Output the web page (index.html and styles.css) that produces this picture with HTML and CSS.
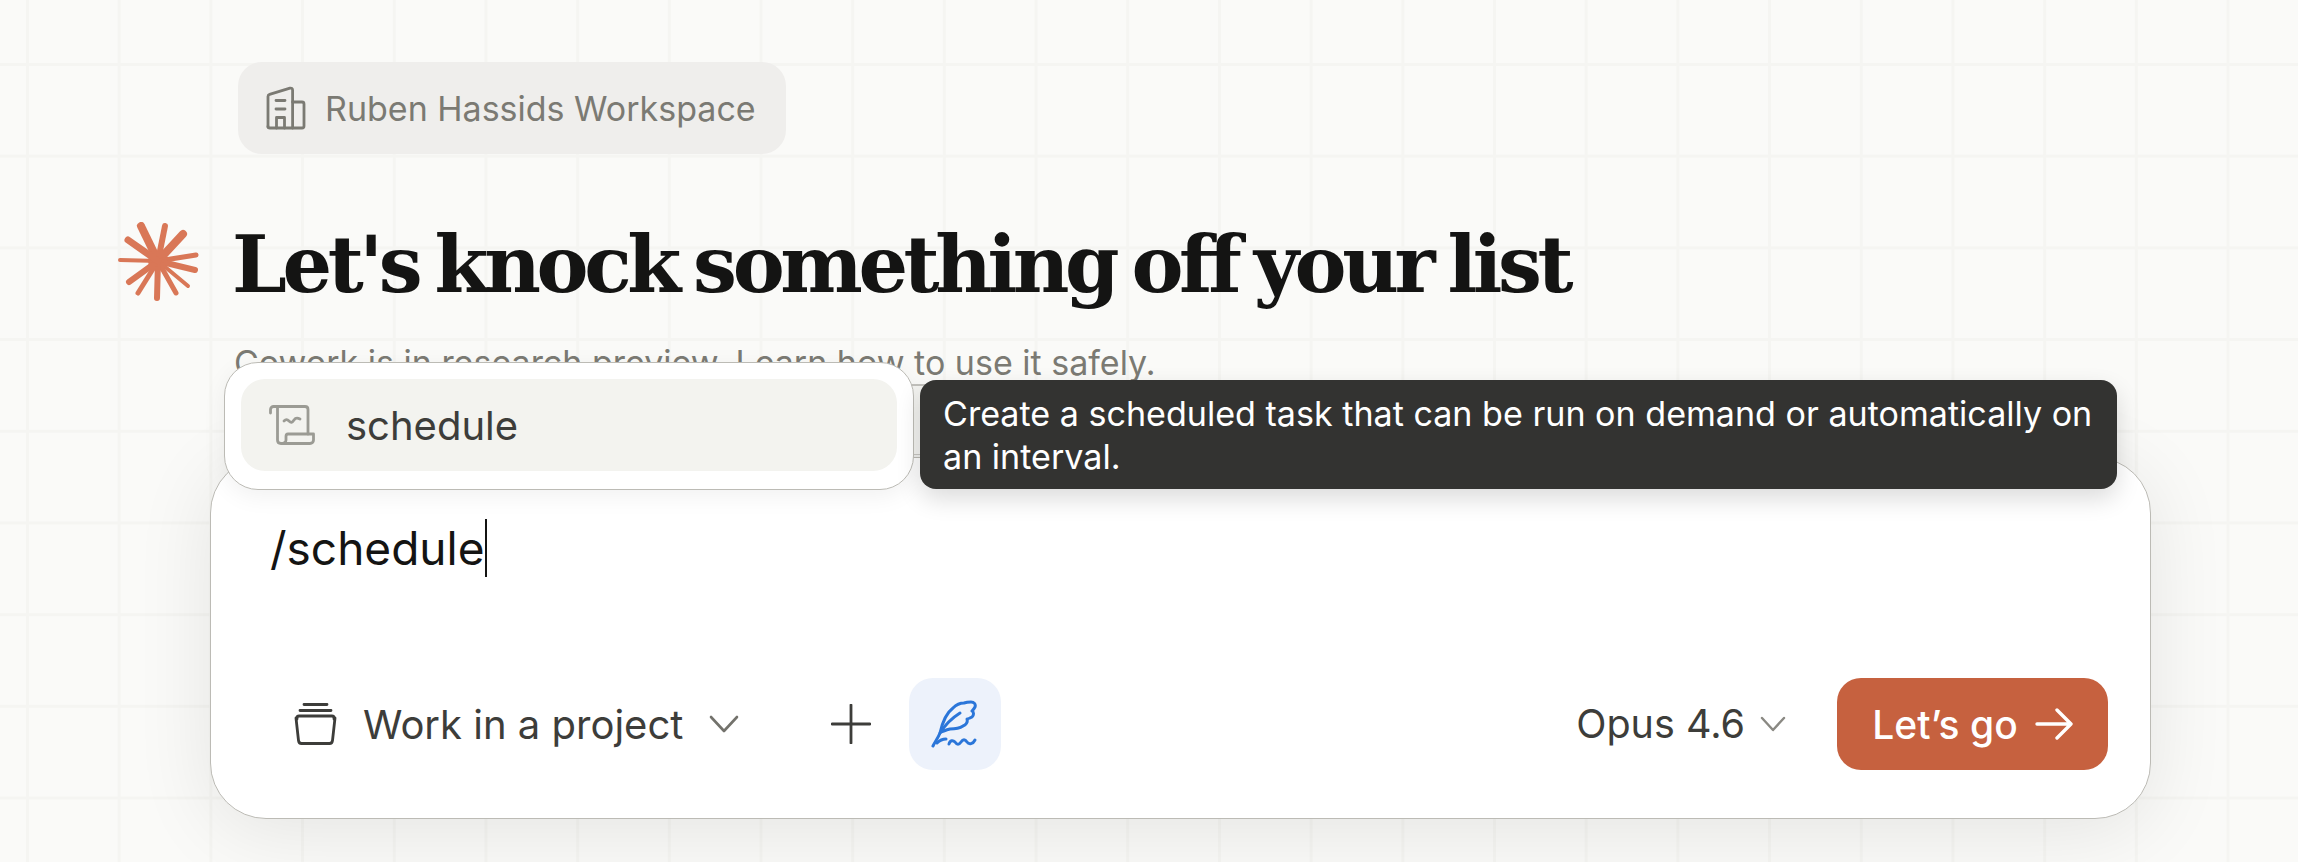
FILE: index.html
```html
<!DOCTYPE html>
<html lang="en">
<head>
  <meta charset="UTF-8">
  <title>Cowork</title>
  <link rel="stylesheet" href="styles.css">
</head>
<body>

  <div class="workspace-chip">
    <svg class="chip-icon" width="40" height="44" viewBox="0 0 40 44" fill="none" stroke="#7b7a73" stroke-width="2.8" stroke-linecap="round" stroke-linejoin="round">
      <path d="M2 41V10.500c0-1 .6-1.800 1.600-2.100L24 2.200c1.400-.4 2.600.5 2.600 2V42"/>
      <path d="M26.600 16H36c1.200 0 2 .8 2 2v22c0 1.200-.8 2-2 2H4c-1.200 0-2-.6-2-1.500"/>
      <path d="M10 14.500h9M10 23h9"/>
      <path d="M10.500 42V31.500h8V42"/>
    </svg>
    <span>Ruben Hassids Workspace</span>
  </div>

  <div class="heading-row">
    <svg class="star" width="82" height="80" viewBox="13 14 82 80" fill="none" stroke="#d97757" stroke-linecap="round">
      <circle cx="53" cy="53" r="10" fill="#d97757" stroke="none"/>
      <path stroke-width="8" d="M53 53L36 18"/>
      <path stroke-width="6" d="M53 53L60 18"/>
      <path stroke-width="8" d="M53 53L78 26"/>
      <path stroke-width="5" d="M53 53L91 47"/>
      <path stroke-width="6" d="M53 53L90 62"/>
      <path stroke-width="4" d="M53 53L83 78"/>
      <path stroke-width="5" d="M53 53L71 85"/>
      <path stroke-width="6" d="M53 53L52 90"/>
      <path stroke-width="5" d="M53 53L33 85"/>
      <path stroke-width="6" d="M53 53L24 74"/>
      <path stroke-width="4" d="M53 53L15 52"/>
      <path stroke-width="7" d="M53 53L23 32"/>
    </svg>
    <h1>Let's knock something off your list</h1>
  </div>

  <p class="subtitle">Cowork is in research preview. Learn how to use it safely.</p>

  <div class="composer">
    <div class="menu-backing"></div>
    <div class="slash-menu">
      <div class="slash-item">
        <svg width="46" height="40" viewBox="0 0 46 40" fill="none" stroke="#9b9b94" stroke-width="2.800" stroke-linecap="round" stroke-linejoin="round">
          <path d="M1.500 8V4.500c0-2 1.500-3 3-3H36c2 0 3 1 3 3V29"/>
          <path d="M8.500 2v33c0 2.500 1.500 3.500 3.500 3.500H41c2 0 3.500-1.500 3.500-3.500v-6H19c-1.500 0-2 1-2 2.500V35c0 2-2 3.500-5 3.500"/>
          <path d="M15 16c2-2 3-2 5 0s3 2 5-1 4-2 6-1"/>
        </svg>
        <span>schedule</span>
      </div>
    </div>
    <div class="tooltip">Create a scheduled task that can be run on demand or automatically on an interval.</div>

    <div class="composer-input">/schedule<span class="caret"></span></div>

    <div class="composer-bar">
      <div class="bar-left">
        <div class="project-select">
          <svg width="43" height="42" viewBox="0 0 43 42" fill="none" stroke="#3d3d3a" stroke-width="2.800" stroke-linecap="round" stroke-linejoin="round">
            <path d="M10 1.500h23M6 7.500h31"/>
            <path d="M3 16v-1c0-1 .8-2 2-2h33c1.200 0 2 1 2 2v1"/>
            <path d="M2 15l2.500 22.500c.2 1.800 1.300 3 3 3h28c1.700 0 2.800-1.200 3-3L41 15"/>
          </svg>
          <span>Work in a project</span>
          <svg class="chev" width="30" height="18" viewBox="0 0 30 18" fill="none" stroke="#73726c" stroke-width="2.600" stroke-linecap="round" stroke-linejoin="round"><path d="M2 2l13 14L28 2"/></svg>
        </div>
        <svg class="plus" width="40" height="40" viewBox="0 0 40 40" fill="none" stroke="#3d3d3a" stroke-width="2.800" stroke-linecap="round"><path d="M20 1v38M1 20h38"/></svg>
        <div class="style-btn">
          <svg width="48" height="48" viewBox="0 0 48 48" fill="none" stroke="#2b76d9" stroke-width="3" stroke-linecap="round" stroke-linejoin="round">
            <path d="M2 46c2-4 5-8 7-13 2-9 5-19 13-25 3-3 8-5 11-5 3-1 5-1 7-1 3 0 5 2 4 5-1 2-2 3-3 4 2 1 2 4 0 6-2 1-4 2-5 2 1 3-1 6-4 7-3 2-8 3-13 3-4 1-6 2-9 3"/>
            <path d="M9 33c5-8 12-15 20-20"/>
            <path d="M6 43c3-3 6-4 9-4"/>
            <path d="M18 44c1-4 4-4 6-2 2 3 4 3 6 0 2-3 4-3 6 0 2 3 6 2 8-2"/>
          </svg>
        </div>
      </div>
      <div class="bar-right">
        <div class="model-select">
          <span>Opus 4.6</span>
          <svg width="26" height="16" viewBox="0 0 26 16" fill="none" stroke="#8a8983" stroke-width="2.400" stroke-linecap="round" stroke-linejoin="round"><path d="M2 2l11 12L24 2"/></svg>
        </div>
        <button class="go-btn">
          <span>Let’s go</span>
          <svg width="38" height="32" viewBox="0 0 38 32" fill="none" stroke="#fff" stroke-width="3.400" stroke-linecap="round" stroke-linejoin="round"><path d="M2 16h33M22 2l14 14-14 14"/></svg>
        </button>
      </div>
    </div>
  </div>

</body>
</html>
```

FILE: styles.css
```css
html, body {
  margin: 0;
  height: 862px;
  overflow: hidden;
}

body {
  font-family: "Inter", sans-serif;
  background-color: #fafaf8;
  background-image:
    linear-gradient(to right, #f5f5f2 3px, transparent 3px),
    linear-gradient(to bottom, #f5f5f2 3px, transparent 3px);
  background-size: 91.7px 91.7px;
  background-position: 26px 63px;
  display: flex;
  flex-direction: column;
  align-items: flex-start;
  padding-top: 62px;
  box-sizing: border-box;
}

.workspace-chip {
  display: flex;
  align-items: center;
  gap: 19px;
  margin-left: 238px;
  width: 548px;
  height: 92px;
  box-sizing: border-box;
  padding-left: 28px;
  background-color: #efeeec;
  border-radius: 24px;
  font-size: 34px;
  color: #7b7a73;
  white-space: nowrap;
}

.heading-row {
  display: flex;
  align-items: center;
  gap: 32px;
  margin-left: 118px;
  margin-top: 64px;
}

.star {
  display: block;
}

h1 {
  margin: 3px 0 -3px;
  font-family: "DejaVu Serif", serif;
  font-size: 78px;
  font-weight: 700;
  line-height: 88px;
  letter-spacing: -4.4px;
  word-spacing: -6.5px;
  color: #141413;
  white-space: nowrap;
}

.subtitle {
  margin: 37px 0 0 234px;
  font-size: 34px;
  line-height: 40px;
  color: #7b7a73;
  white-space: nowrap;
}

.composer {
  position: absolute;
  left: 210px;
  top: 457px;
  width: 1941px;
  height: 362px;
  box-sizing: border-box;
  padding: 61px 42px 48px 59px;
  display: flex;
  flex-direction: column;
  justify-content: space-between;
  background: #fff;
  border: 1.5px solid #bcbbb5;
  border-radius: 56px;
  box-shadow: 0 12px 80px rgba(0,0,0,0.09);
}

.menu-backing {
  position: absolute;
  left: 690px;
  top: -74px;
  width: 30px;
  height: 71px;
  box-sizing: border-box;
  background: #f6f6f3;
  border-top: 2px solid #c4c3be;
  border-bottom: 1px solid #c9c8c3;
}

.slash-menu {
  position: absolute;
  left: 13px;
  top: -96px;
  width: 690px;
  height: 128px;
  box-sizing: border-box;
  padding: 16px;
  background: #fff;
  border: 1.5px solid #bcbbb5;
  border-radius: 34px;
  box-shadow: 0 6px 24px rgba(0,0,0,0.06);
}

.slash-item {
  display: flex;
  align-items: center;
  gap: 31px;
  height: 92px;
  padding-left: 28px;
  background: #f3f3ef;
  border-radius: 24px;
  font-size: 40px;
  color: #3d3d3a;
}

.tooltip {
  position: absolute;
  left: 709px;
  top: -78px;
  width: 1197px;
  height: 109px;
  box-sizing: border-box;
  padding: 12px 23px;
  background: #333331;
  border-radius: 16px;
  color: #fff;
  font-size: 34.1px;
  line-height: 43px;
  box-shadow: 0 10px 24px rgba(0,0,0,0.14);
}

.composer-input {
  display: flex;
  align-items: center;
  height: 58px;
  font-size: 46px;
  color: #141413;
}

.caret {
  display: inline-block;
  width: 2px;
  height: 58px;
  margin-left: 1px;
  background: #141413;
}

.composer-bar {
  display: flex;
  align-items: center;
  justify-content: space-between;
  height: 92px;
}

.bar-left, .bar-right, .project-select, .model-select {
  display: flex;
  align-items: center;
}

.project-select {
  margin-left: 24px;
  gap: 26px;
  font-size: 40px;
  color: #3d3d3a;
}

.plus {
  margin-left: 92px;
}

.style-btn {
  display: flex;
  align-items: center;
  justify-content: center;
  width: 92px;
  height: 92px;
  margin-left: 38px;
  background: #edf2fb;
  border-radius: 24px;
}

.model-select {
  gap: 15px;
  font-size: 39.5px;
  color: #3d3d3a;
}

.go-btn {
  display: flex;
  align-items: center;
  justify-content: center;
  gap: 17px;
  width: 271px;
  height: 92px;
  margin-left: 51px;
  padding: 0;
  background: #c6613f;
  border: none;
  border-radius: 24px;
  color: #fff;
  font-family: inherit;
  font-size: 39px;
  font-weight: 500;
}
```
